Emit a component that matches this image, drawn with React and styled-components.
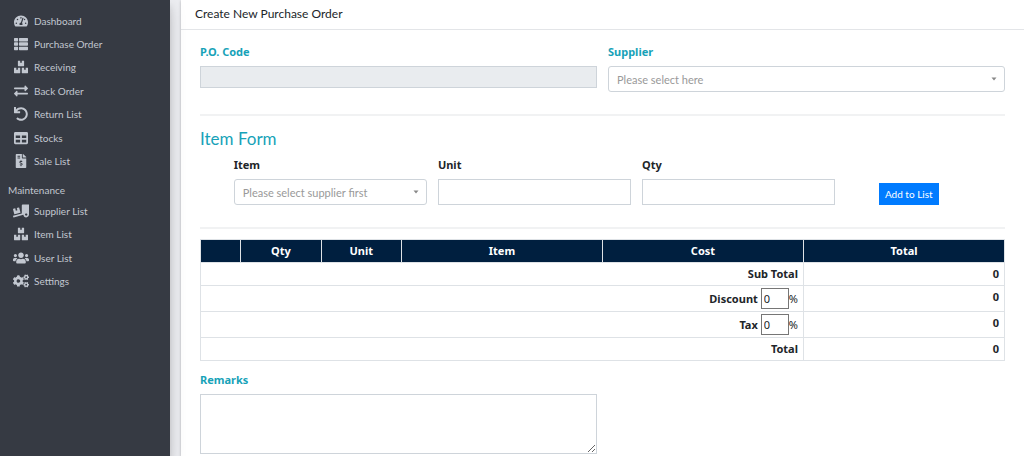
import { useState } from "react";
import styled, { createGlobalStyle } from "styled-components";
import {
    FaTachometerAlt,
    FaThList,
    FaBoxes,
    FaExchangeAlt,
    FaUndo,
    FaTable,
    FaFileInvoiceDollar,
    FaTruckLoading,
    FaUsers,
    FaCogs,
} from "react-icons/fa";

const mainMenu = [
    { name: "Dashboard", icon: FaTachometerAlt },
    { name: "Purchase Order", icon: FaThList },
    { name: "Receiving", icon: FaBoxes },
    { name: "Back Order", icon: FaExchangeAlt },
    { name: "Return List", icon: FaUndo },
    { name: "Stocks", icon: FaTable },
    { name: "Sale List", icon: FaFileInvoiceDollar },
];

const maintenanceMenu = [
    { name: "Supplier List", icon: FaTruckLoading, wide: true },
    { name: "Item List", icon: FaBoxes },
    { name: "User List", icon: FaUsers, wide: true },
    { name: "Settings", icon: FaCogs, wide: true },
];

function Menu({ items, minHeight }) {
    return (
        <MenuList $minHeight={minHeight}>
            {items.map(({ name, icon: Icon, wide }) => (
                <li key={name}>
                    <MenuLink href="#">
                        <MenuIcon $wide={wide}>
                            <Icon />
                        </MenuIcon>
                        {name}
                    </MenuLink>
                </li>
            ))}
        </MenuList>
    );
}

function Dropdown({ id, placeholder }) {
    return (
        <SelectBox>
            <Select id={id} defaultValue="">
                <option value="">{placeholder}</option>
            </Select>
            <Arrow viewBox="0 0 6 4" aria-hidden="true">
                <path d="M0.5 0.5h5L3 3.5z" fill="#888" />
            </Arrow>
        </SelectBox>
    );
}

function PercentField({ id, label, value, onChange }) {
    return (
        <Percent>
            <label htmlFor={id}>{label}</label>
            <PercentInput id={id} value={value} onChange={(e) => onChange(e.target.value)} />
            <PercentSign>%</PercentSign>
        </Percent>
    );
}

export default function App() {
    const [discount, setDiscount] = useState("0");
    const [tax, setTax] = useState("0");

    return (
        <Layout>
            <GlobalStyle />
            <Sidebar>
                <Menu items={mainMenu} minHeight="164px" />
                <MenuHeader>Maintenance</MenuHeader>
                <Menu items={maintenanceMenu} minHeight="94px" />
            </Sidebar>
            <Content>
                <Card>
                    <CardHeader>
                        <CardTitle>Create New Purchase Order</CardTitle>
                    </CardHeader>
                    <CardBody>
                        <Row>
                            <Half>
                                <Label htmlFor="po_code" $info>P.O. Code</Label>
                                <CodeInput id="po_code" type="text" readOnly />
                            </Half>
                            <Half>
                                <Label htmlFor="supplier_id" $info>Supplier</Label>
                                <Dropdown id="supplier_id" placeholder="Please select here" />
                            </Half>
                        </Row>
                        <Divider />
                        <Legend>Item Form</Legend>
                        <ItemRow>
                            <ItemField>
                                <Label htmlFor="item_id">Item</Label>
                                <Dropdown id="item_id" placeholder="Please select supplier first" />
                            </ItemField>
                            <ItemField>
                                <Label htmlFor="unit">Unit</Label>
                                <Input id="unit" type="text" />
                            </ItemField>
                            <ItemField>
                                <Label htmlFor="qty">Qty</Label>
                                <Input id="qty" type="text" />
                            </ItemField>
                            <ButtonField>
                                <AddButton type="button">Add to List</AddButton>
                            </ButtonField>
                        </ItemRow>
                        <Divider />
                        <Table>
                            <colgroup>
                                <Col $width="5%" />
                                <Col $width="10%" />
                                <Col $width="10%" />
                                <Col $width="25%" />
                                <Col $width="25%" />
                                <Col $width="25%" />
                            </colgroup>
                            <thead>
                                <tr>
                                    <HeadCell />
                                    <HeadCell>Qty</HeadCell>
                                    <HeadCell>Unit</HeadCell>
                                    <HeadCell>Item</HeadCell>
                                    <HeadCell>Cost</HeadCell>
                                    <HeadCell>Total</HeadCell>
                                </tr>
                            </thead>
                            <tfoot>
                                <tr>
                                    <FootCell colSpan={5}>Sub Total</FootCell>
                                    <FootCell>0</FootCell>
                                </tr>
                                <tr>
                                    <FootCell colSpan={5}>
                                        <PercentField
                                            id="discount_perc"
                                            label="Discount"
                                            value={discount}
                                            onChange={setDiscount}
                                        />
                                    </FootCell>
                                    <FootCell>0</FootCell>
                                </tr>
                                <tr>
                                    <FootCell colSpan={5}>
                                        <PercentField
                                            id="tax_perc"
                                            label="Tax"
                                            value={tax}
                                            onChange={setTax}
                                        />
                                    </FootCell>
                                    <FootCell>0</FootCell>
                                </tr>
                                <tr>
                                    <FootCell colSpan={5}>Total</FootCell>
                                    <FootCell>0</FootCell>
                                </tr>
                            </tfoot>
                        </Table>
                        <Row>
                            <Half>
                                <Label htmlFor="remarks" $info>Remarks</Label>
                                <Remarks id="remarks" />
                            </Half>
                            <Half />
                        </Row>
                    </CardBody>
                </Card>
            </Content>
        </Layout>
    );
}

const boldFont = `"Noto Sans", "Open Sans", sans-serif`;

const GlobalStyle = createGlobalStyle`
    * {
        box-sizing: border-box;
    }
    body {
        margin: 0;
        color: #212529;
        font-family: Lato, "Open Sans", sans-serif;
        font-size: 11px;
        line-height: 16px;
        overflow: hidden;
    }
    input, select, textarea, button {
        font: inherit;
        color: inherit;
        margin: 0;
    }
`;

const Layout = styled.div`
    display: flex;
    height: 100vh;
`;

const Sidebar = styled.nav`
    flex: 0 0 170px;
    padding: 9px 8px;
    background: #363a43;
    color: #c2c7d0;
    font-size: 10px;
    box-shadow: 0 8px 16px rgba(0, 0, 0, 0.15), 0 6px 6px rgba(0, 0, 0, 0.12);
    z-index: 1;
`;

const MenuList = styled.ul`
    display: grid;
    grid-auto-rows: 1fr;
    min-height: ${({ $minHeight }) => $minHeight};
    margin: 0;
    padding: 0;
    list-style: none;
`;

const MenuLink = styled.a`
    display: flex;
    align-items: center;
    height: 23px;
    color: inherit;
    text-decoration: none;
`;

const MenuIcon = styled.span`
    display: flex;
    justify-content: center;
    width: 26px;
    font-size: ${({ $wide }) => ($wide ? "16px" : "14px")};
`;

const MenuHeader = styled.div`
    padding: 9px 0 1px;
`;

const Content = styled.main`
    flex: 1;
    min-width: 0;
    padding-left: 11px;
    background: #ecedf1;
`;

const Card = styled.section`
    min-height: 100%;
    background: #fff;
    box-shadow: 0 0 1px rgba(0, 0, 0, 0.13), 0 1px 3px rgba(0, 0, 0, 0.2);
`;

const CardHeader = styled.header`
    padding: 4px 14px 5px;
    border-bottom: 1px solid #e3e5e8;
`;

const CardTitle = styled.h4`
    margin: 0;
    font-size: 12px;
    font-weight: 400;
    line-height: 20px;
`;

const CardBody = styled.div`
    padding: 14px 19px 0;
`;

const Row = styled.div`
    display: flex;
    gap: 11px;
`;

const Half = styled.div`
    flex: 1;
    min-width: 0;
`;

const Label = styled.label`
    display: block;
    margin-bottom: 6px;
    font-family: ${boldFont};
    font-weight: 700;
    color: ${({ $info }) => ($info ? "#17a2b8" : "#212529")};
`;

const Input = styled.input`
    display: block;
    width: 100%;
    height: 26px;
    padding: 2px 8px;
    border: 1px solid #ced4da;
    border-radius: 0;
    background: #fff;
`;

const CodeInput = styled(Input)`
    height: 22px;
    background: #e9ecef;
`;

const SelectBox = styled.div`
    position: relative;
`;

const Select = styled.select`
    display: block;
    width: 100%;
    height: 26px;
    padding: 1px 8px 0;
    border: 1px solid #ced4da;
    border-radius: 3px;
    background: #fff;
    color: #999;
    appearance: none;
`;

const Arrow = styled.svg`
    position: absolute;
    top: 11px;
    right: 8px;
    width: 6px;
    height: 4px;
    pointer-events: none;
`;

const Divider = styled.hr`
    height: 2px;
    margin: 22px 0 10px;
    border: 0;
    background: #f1f2f3;
`;

const Legend = styled.h4`
    margin: 0 0 5px;
    color: #17a2b8;
    font-size: 17px;
    font-weight: 400;
    line-height: 26px;
`;

const ItemRow = styled(Row)`
    justify-content: center;
`;

const ItemField = styled.div`
    flex: 0 0 24%;
`;

const ButtonField = styled.div`
    display: flex;
    flex: 0 1 125px;
    align-items: flex-end;
    justify-content: center;
`;

const AddButton = styled.button`
    padding: 2px 5px;
    border: 1px solid #007bff;
    background: #007bff;
    color: #fff;
    font-size: 10px;
    white-space: nowrap;
`;

const Table = styled.table`
    width: 100%;
    margin-bottom: 11px;
    border-collapse: collapse;
    table-layout: fixed;
    font-family: ${boldFont};
`;

const Col = styled.col`
    width: ${({ $width }) => $width};
`;

const HeadCell = styled.th`
    height: 23px;
    padding: 3px 5px;
    border: 1px solid #dee2e6;
    background: #001f3f;
    color: #fff;
    text-align: center;
`;

const FootCell = styled.th`
    padding: 3px 5px;
    border: 1px solid #dee2e6;
    text-align: right;
    vertical-align: top;
`;

const Percent = styled.div`
    display: flex;
    align-items: center;
    justify-content: flex-end;
    margin: -1px 0;
`;

const PercentInput = styled.input`
    width: 28px;
    height: 21px;
    margin-left: 3px;
    padding: 1px 2px;
    border: 1px solid #767676;
    font-weight: 400;
`;

const PercentSign = styled.span`
    font-weight: 400;
`;

const Remarks = styled.textarea`
    display: block;
    width: 100%;
    height: 60px;
    padding: 4px 8px;
    border: 1px solid #ced4da;
    resize: vertical;
`;
